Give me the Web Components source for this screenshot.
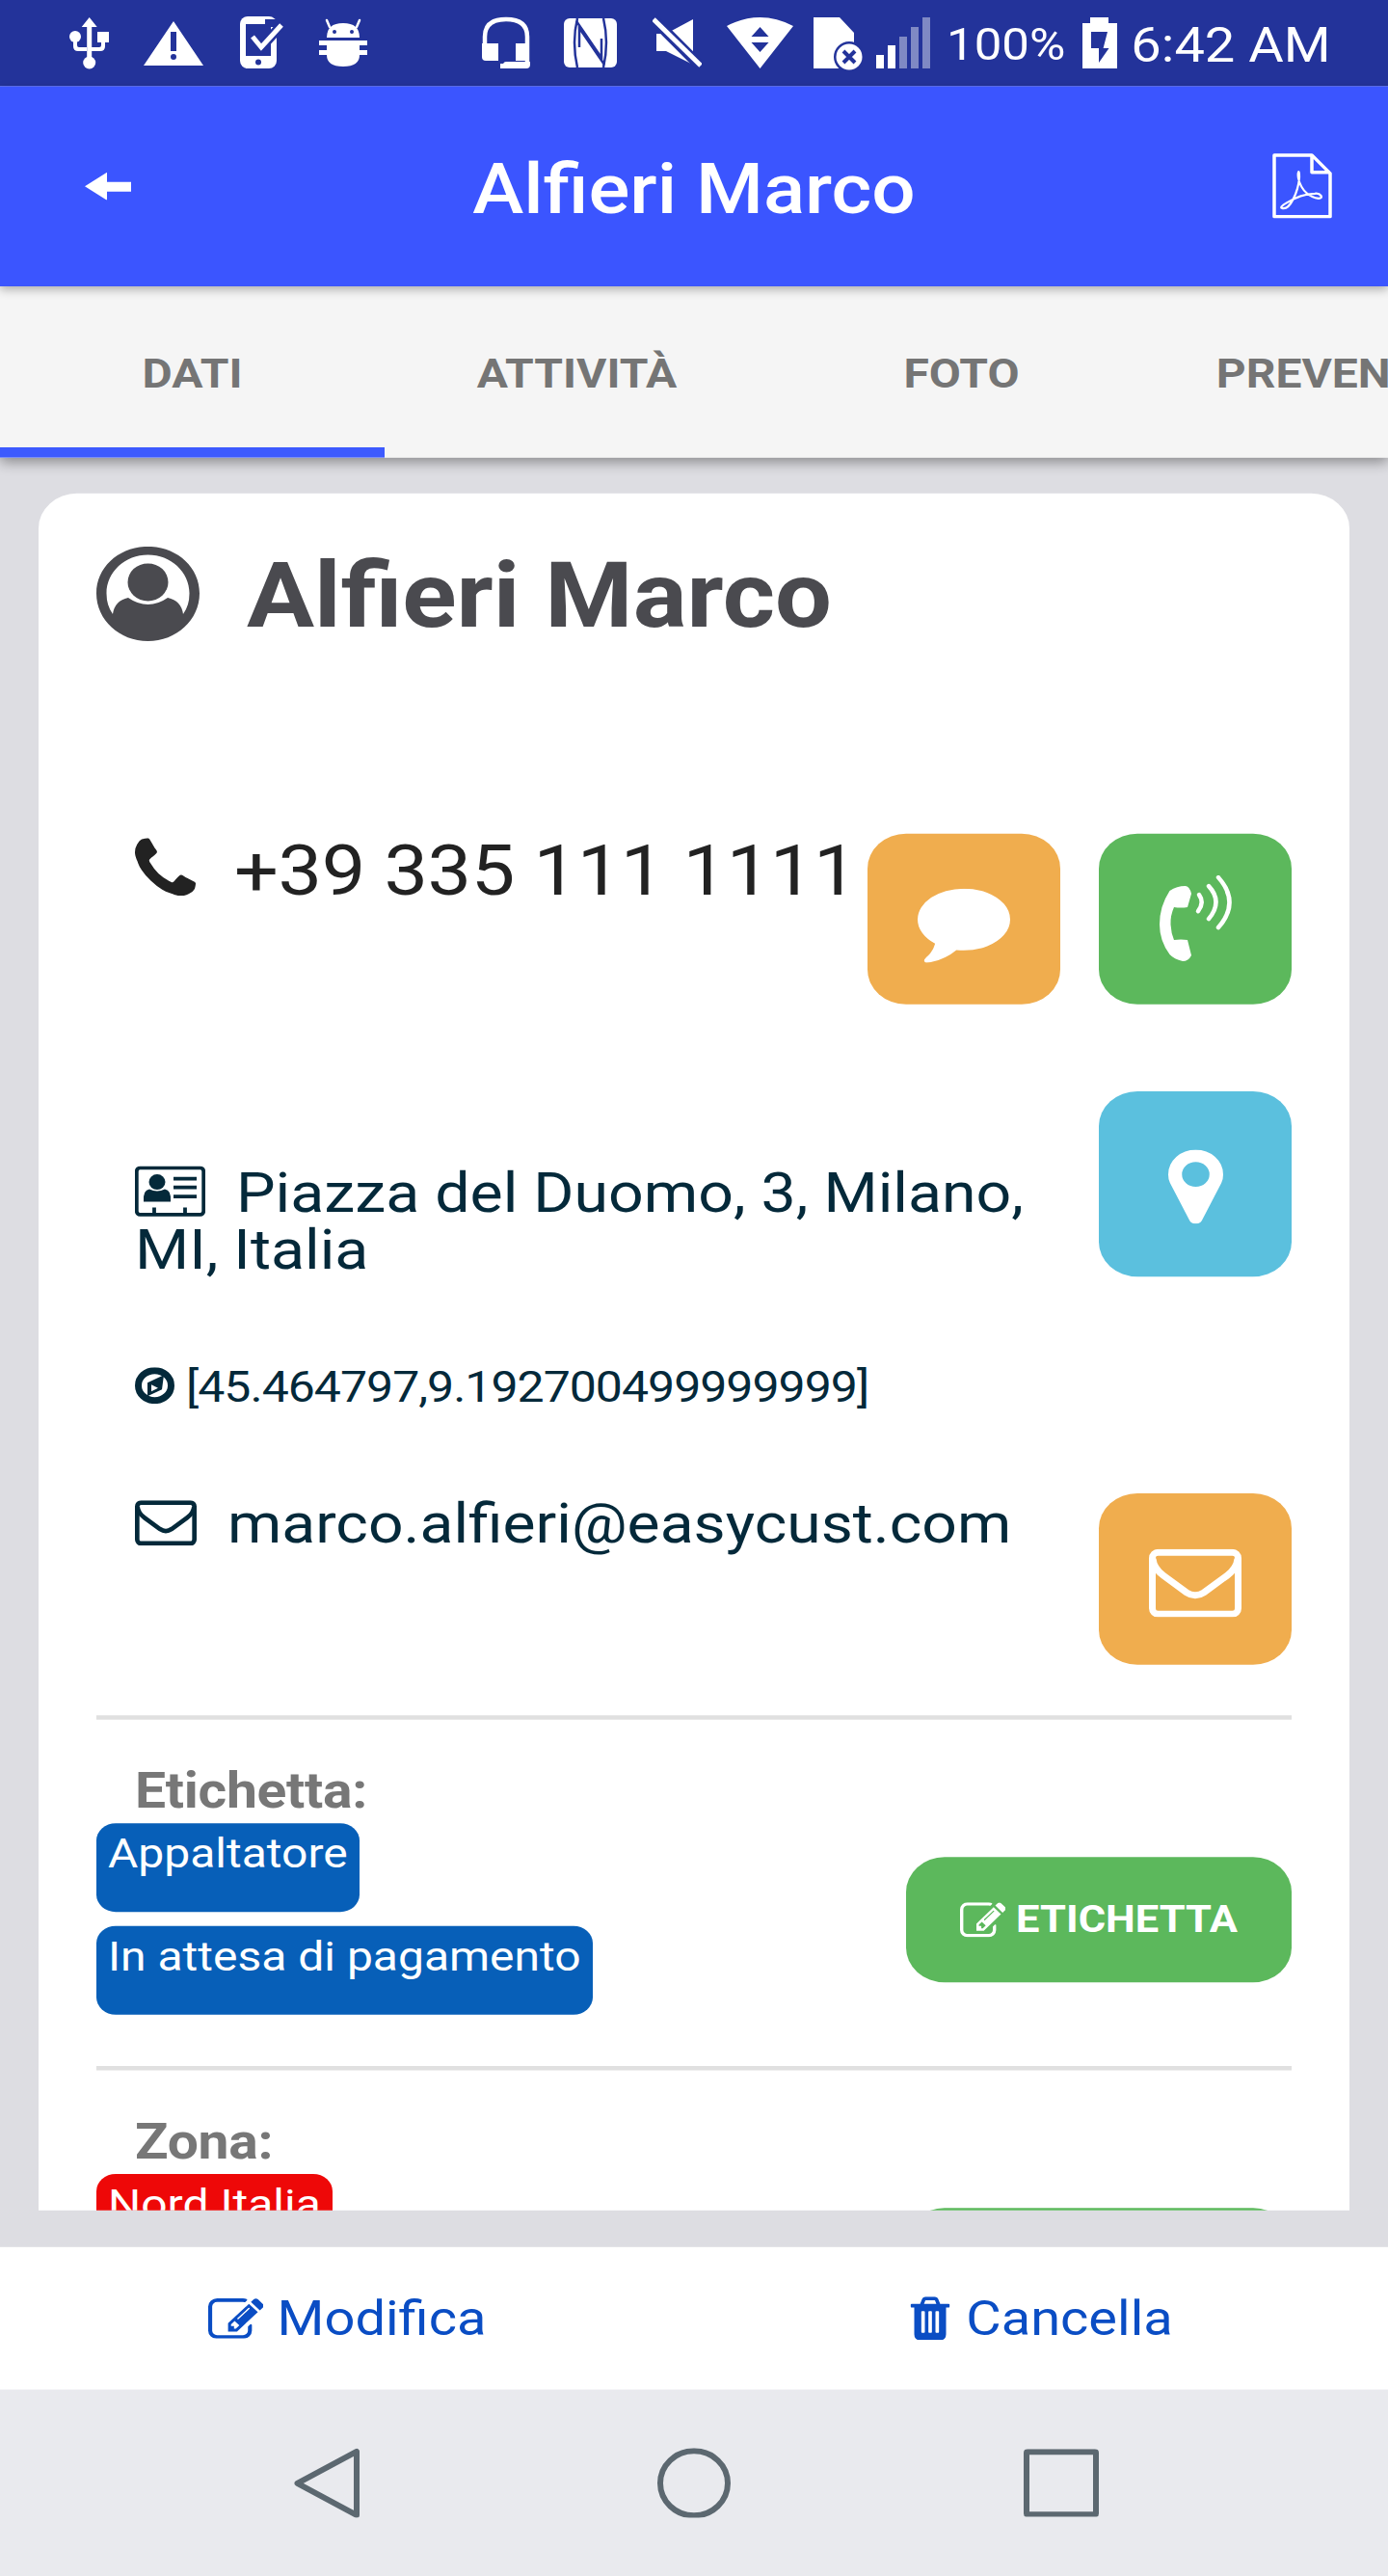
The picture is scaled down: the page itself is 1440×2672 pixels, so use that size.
<!DOCTYPE html>
<html lang="it">
<head>
<meta charset="utf-8">
<title>Alfieri Marco</title>
<style>
  html, body { margin: 0; height: 2672px; overflow: hidden; background: #dddde2; }
</style>
</head>
<body>
<app-shell>
  <status-bar slot="status"></status-bar>
  <app-header slot="header">Alfieri Marco</app-header>
  <tab-strip slot="tabs">
    <tab-item active>DATI</tab-item>
    <tab-item>ATTIVITÀ</tab-item>
    <tab-item>FOTO</tab-item>
    <tab-item>PREVENTIVI</tab-item>
  </tab-strip>

  <customer-card slot="card">
    <card-head>Alfieri Marco</card-head>

    <contact-row style="--h:196.5px">
      <contact-line icon="phone" style="--fs:81px;--lh:100px;--mt:-6.9px;--ls:-.4px;--im:40px;--iv:-1px;--c:#222;--ws:nowrap">+39 335 111 1111</contact-line>
      <action-tile slot="actions" color="#f0ad4e" style="--th:196.5px"><ui-icon name="comment" style="margin-top:14px"></ui-icon></action-tile>
      <action-tile slot="actions" color="#5cb85c" style="--th:196.5px"><ui-icon name="callvol"></ui-icon></action-tile>
    </contact-row>

    <contact-row style="--h:212.7px;--top:99.7px">
      <contact-line icon="idcard" style="--fs:64.4px;--lh:66px;--pt:83px;--im:32px;--iv:-5.5px;--w:960px">Piazza del Duomo, 3, Milano, MI, Italia</contact-line>
      <action-tile slot="actions" color="#5bc0de" style="--th:212.7px"><ui-icon name="pin" style="margin-top:6px"></ui-icon></action-tile>
    </contact-row>

    <contact-row style="--h:60px;--top:97.5px">
      <contact-line icon="compass" style="--fs:50px;--lh:60px;--ls:-1px;--im:12px;--iv:-2px">[45.464797,9.192700499999999]</contact-line>
    </contact-row>

    <contact-row style="--h:197px;--top:92px">
      <contact-line icon="envelope" style="--fs:64.2px;--lh:66px;--pt:1.5px;--im:32px;--iv:-3px">marco.alfieri@easycust.com</contact-line>
      <action-tile slot="actions" color="#f0ad4e"><ui-icon name="envelope-big" style="margin-top:8px"></ui-icon></action-tile>
    </contact-row>

    <tag-section label="Etichetta:" style="margin-top:58px">
      <tag-badge>Appaltatore</tag-badge>
      <tag-badge>In attesa di pagamento</tag-badge>
      <label-button slot="action">ETICHETTA</label-button>
    </tag-section>

    <tag-section label="Zona:">
      <tag-badge color="#ee0808">Nord Italia</tag-badge>
      <label-button slot="action"></label-button>
    </tag-section>
  </customer-card>

  <footer-actions slot="footer">
    <footer-link icon="edit">Modifica</footer-link>
    <footer-link icon="trash">Cancella</footer-link>
  </footer-actions>
  <nav-bar slot="nav"></nav-bar>
</app-shell>

<script>
// the screenshot is squeezed vertically, so the shell lays out at 2960 and is scaled down
const SQUEEZE = 0.9027;

const FA_EDIT = 'M888 1184l116-116-152-152-116 116v56h96v96h56zm440-720q-16-16-33 1l-350 350q-17 17-1 33t33-1l350-350q17-17 1-33zm80 594v190q0 119-84.5 203.5t-203.5 84.5h-832q-119 0-203.5-84.5t-84.5-203.5v-832q0-119 84.5-203.5t203.5-84.5h832q63 0 117 25 15 7 18 23 3 17-9 29l-49 49q-14 14-32 8-23-6-45-6h-832q-66 0-113 47t-47 113v832q0 66 47 113t113 47h832q66 0 113-47t47-113v-126q0-13 9-22l64-64q15-15 35-7t20 29zm-96-738l288 288-672 672h-288v-288zm444 132l-92 92-288-288 92-92q28-28 68-28t68 28l152 152q28 28 28 68t-28 68z';
const ENVELOPE = `
    <g fill="none" stroke="currentColor" stroke-width="7">
      <rect x="3.500" y="3.500" width="89" height="64" rx="6"/>
      <path d="M4 10Q5 20 15 27.500L39 45Q48 51 57 45L81 27.500Q91 20 92 10"/>
    </g>`;

// every icon: w/h in screenshot pixels, vb = viewBox, body = svg markup
const ICONS = {
  usb: { w: 41, h: 89, body: `
    <path d="M20.7 18l8 10h-5.5v32h-5V28h-5.500z"/>
    <circle cx="20.700" cy="65" r="6.500"/><circle cx="6" cy="38" r="6" />
    <path d="M4 42h4v5q0 2 2 2h8v4h-9q-5 0-5-5zM29 33h12v11h-4v4q0 5-5 5h-10v-4h9q2 0 2-2v-3h-4z"/>` },
  warn: { w: 62, h: 89, body: `
    <path fill-rule="evenodd" d="M31 22L62 68H0zM28 33v20h6V33zM31 56a3 3 0 100 6 3 3 0 000-6z"/>` },
  phonecheck: { w: 46, h: 89, body: `
    <rect x="0" y="17" width="38" height="54" rx="8"/>
    <rect x="6" y="25" width="26" height="33" fill="#23339a"/>
    <path d="M26 20h14v8H26z" fill="#23339a"/>
    <circle cx="19" cy="64.500" r="3" fill="#23339a"/>
    <path d="M13 38l9 11 21-23" fill="none" stroke="#23339a" stroke-width="10"/>
    <path d="M13 38l9 11 21-23" fill="none" stroke="#fff" stroke-width="5"/>` },
  android: { w: 50, h: 89, body: `
    <path d="M8 39q0-15 17-15t17 15z"/>
    <path d="M11 28l-3-7M39 28l3-7" stroke="#fff" stroke-width="2.500" stroke-linecap="round"/>
    <circle cx="16" cy="33" r="2" fill="#23339a"/><circle cx="34" cy="33" r="2" fill="#23339a"/>
    <path d="M0 42h50v5H42v5h8v5H42q0 12-17 12T8 57H0v-5h8v-5H0z"/>` },
  headset: { w: 50, h: 89, body: `
    <path d="M3 50V38Q3 20 25 20T47 38V66" fill="none" stroke="#fff" stroke-width="4.500"/>
    <path d="M0 45h17v18H4q-4 0-4-4z"/><path d="M35 45h13v18H35z"/>
    <path d="M19 66h3q1-2 3-2h25v3q0 4-4 4H19z"/>` },
  nfc: { w: 55, h: 89, body: `
    <rect y="19" width="55" height="51" rx="6"/>
    <g fill="none" stroke="#23339a" stroke-width="2.500">
      <path d="M14 19q-6 25 0 51M41 19q6 25 0 51"/>
      <path d="M13 22L39 60V40M42 67L16 29V49"/>
    </g>` },
  mute: { w: 51, h: 89, body: `
    <path d="M4 35H14L42 20V67L14 53H4z"/>
    <path d="M0 19L49 68" stroke="#23339a" stroke-width="11"/>
    <path d="M1 20L50 68" stroke="#fff" stroke-width="5"/>` },
  wifi: { w: 69, h: 89, body: `
    <path fill-rule="evenodd" d="M0 27Q34.500 9 69 27L34.500 71zM34.500 28l-9 10h18zM25.500 44l9 10 9-10z"/>` },
  sim: { w: 51, h: 89, body: `
    <path d="M0 18H27L42 34V71H0z"/>
    <circle cx="37" cy="59" r="16" fill="#23339a"/><circle cx="37" cy="59" r="13.500"/>
    <path d="M31 53L43 65M43 53L31 65" stroke="#23339a" stroke-width="4"/>` },
  signal: { w: 56, h: 89, body: `
    <rect y="57" width="8" height="14"/><rect x="12" y="47" width="8" height="24"/>
    <g opacity=".42"><rect x="24" y="38" width="8" height="33"/><rect x="36" y="28" width="8" height="43"/><rect x="48" y="18" width="8" height="53"/></g>` },
  battery: { w: 36, h: 89, body: `
    <path fill-rule="evenodd" d="M8 18H27V24H36V71H0V24H8zM9 33H26L21.600 50H27.500L17 65V50H9z"/>` },
  back: { w: 48, h: 29, body: `<path d="M23 0V10H48V20H23V29L0 14.500z"/>` },
  pdf: { w: 62, h: 68, body: `
    <g fill="none" stroke="#fff" stroke-width="3.500" stroke-linejoin="round">
      <path d="M2 2H41L60 21V66H2zM41 2V20H60"/>
      <path stroke-width="2.200" d="M10 57C18 60 27 40 28 25C28 15 26 20 27 26C30 40 40 46 48 47C54 47 50 41 44 42C32 42 22 47 14 52C10 54 8 57 10 57z"/>
    </g>` },
  usercircle: { w: 107, h: 98, body: `
    <path fill-rule="evenodd" d="M53.500 0C83 0 107 21 107 48.500S83 98 53.500 98 0 76 0 48.500 24 0 53.500 0zM53.500 8.500C30 8.500 10.500 26 10.500 48.500Q10.500 61 17 70 19 56 33 53 43 60 53.500 60T74 53Q88 56 90 70 96.500 61 96.500 48.500C96.500 26 77 8.500 53.500 8.500z"/>
    <ellipse cx="53.500" cy="37" rx="21" ry="19.500"/>` },
  phone: { w: 63, h: 60, vb: '192 128 1408 1408', body: `
    <path d="M1600 1240q0 27-10 70.500t-21 68.500q-21 50-122 106-94 51-186 51-27 0-53-3.500t-57.500-12.500-47-14.500-55.500-20.500-49-18q-98-35-175-83-127-79-264-216t-216-264q-48-77-83-175-3-9-18-49t-20.500-55.500-14.500-47-12.500-57.500-3.500-53q0-92 51-186 56-101 106-122 25-11 68.500-21t70.500-10q14 0 21 3 18 6 53 76 11 19 30 54t35 63.500 31 53.500q3 4 17.500 25t21.500 35.500 7 28.500q0 20-28.500 50t-62 55-62 53-28.500 46q0 9 5 22.500t8.500 20.500 14 24 11.500 19q76 137 174 235t235 174q2 1 19 11.500t24 14 20.500 8.500 22.500 5q18 0 46-28.500t53-62 55-62 50-28.500q14 0 28.500 7t35.500 21.500 25 17.500q25 15 53.500 31t63.500 35 54 30q70 35 76 53 3 7 3 21z"/>` },
  comment: { w: 96, h: 77, vb: '0 256 1792 1536', body: `
    <path d="M1792 896q0 174-120 321.500t-326 233-450 85.500q-70 0-145-8-198 175-460 242-49 14-114 22-17 2-30.500-9t-17.500-29v-1q-3-4-.5-12t2-10 4.500-9.500l6-9 7-8.500 8-9q7-8 31-34.500t34.500-38 31-39.500 32.500-51 27-59 26-76q-157-89-247.500-220t-90.500-281q0-130 71-248.500t191-204.500 286-136.500 348-50.500q244 0 450 85.500t326 233 120 321.500z"/>` },
  callvol: { w: 75, h: 90, body: `
    <path d="M26.600 11Q31 11 33 19L29 33Q22 34 15 33 11 42 11.500 51 12 60 15 67 22 66 29 67L33 83Q30 89 24 89 15 87 10.500 82 0 68 0 51 0 32 10.500 16 18 11 26.600 11z"/>
    <g fill="none" stroke="#fff" stroke-width="4.500" stroke-linecap="round">
      <path d="M41 20Q47 28 40 37"/><path d="M51 11Q66 27 51 45"/><path d="M61 2Q84 28 61 54"/>
    </g>` },
  pin: { w: 57, h: 77, vb: '384 128 1024 1536', body: `
    <path d="M1152 640q0-106-75-181t-181-75-181 75-75 181 75 181 181 75 181-75 75-181zm256 0q0 109-33 179l-364 774q-16 33-47.500 52t-67.500 19-67.500-19-46.500-52l-365-774q-33-70-33-179 0-212 150-362t362-150 362 150 150 362z"/>` },
  envelope: { w: 64, h: 47, vb: '0 0 96 71', body: ENVELOPE },
  'envelope-big': { w: 96, h: 71, vb: '0 0 96 71', body: ENVELOPE },
  idcard: { w: 73, h: 52, body: `
    <rect x="1.800" y="1.800" width="69.400" height="48.400" rx="3.500" fill="none" stroke="currentColor" stroke-width="3.800"/>
    <ellipse cx="23" cy="16.500" rx="8.500" ry="8"/>
    <path d="M9 37Q8 25 15 24 23 28 31 24 38 25 37 37z"/>
    <path d="M40 13H64M40 22H64M40 31.500H64M20 43V50M52 43V50" stroke="currentColor" stroke-width="3.800" fill="none"/>` },
  compass: { w: 41, h: 38, body: `
    <ellipse cx="20.500" cy="19" rx="17" ry="15.500" fill="none" stroke="currentColor" stroke-width="7"/>
    <path fill-rule="evenodd" d="M30 8L28 23 13 30 13 16zM17 18v7l7-3.500z"/>` },
  edit: { w: 57, h: 42, vb: '0 128 1770 1408', body: `<path d="${FA_EDIT}"/>` },
  'edit-small': { w: 47, h: 36, vb: '0 128 1770 1408', body: `<path d="${FA_EDIT}"/>` },
  trash: { w: 44, h: 45, vb: '128 128 1536 1536', body: `
    <path d="M704 1376v-704q0-14-9-23t-23-9h-64q-14 0-23 9t-9 23v704q0 14 9 23t23 9h64q14 0 23-9t9-23zm256 0v-704q0-14-9-23t-23-9h-64q-14 0-23 9t-9 23v704q0 14 9 23t23 9h64q14 0 23-9t9-23zm256 0v-704q0-14-9-23t-23-9h-64q-14 0-23 9t-9 23v704q0 14 9 23t23 9h64q14 0 23-9t9-23zm-544-992h448l-48-117q-7-9-17-11h-317q-10 2-17 11zm928 32v64q0 14-9 23t-23 9h-96v948q0 83-47 143.500t-113 60.500h-832q-66 0-113-58.500t-47-141.500v-952h-96q-14 0-23-9t-9-23v-64q0-14 9-23t23-9h309l70-167q15-37 54-63t79-26h320q40 0 79 26t54 63l70 167h309q14 0 23 9t9 23z"/>` },
  'nav-back': { w: 68, h: 73, body: `<path d="M65 3.500V69.500L3.500 36.500z" fill="none" stroke="currentColor" stroke-width="6" stroke-linejoin="round"/>` },
  'nav-home': { w: 76, h: 73, body: `<ellipse cx="38" cy="36.500" rx="35" ry="33.500" fill="none" stroke="currentColor" stroke-width="6"/>` },
  'nav-recent': { w: 78, h: 71, body: `<rect x="3" y="3" width="72" height="65" rx="1" fill="none" stroke="currentColor" stroke-width="6"/>` },
};

class UiIcon extends HTMLElement {
  connectedCallback() {
    const icon = ICONS[this.getAttribute('name')];
    const vb = icon.vb || `0 0 ${icon.w} ${icon.h}`;
    this.attachShadow({ mode: 'open' }).innerHTML = `
      <style>
        :host { display: block; flex: none; width: ${icon.w}px; height: ${icon.h / SQUEEZE}px; line-height: 0; }
        svg { display: block; width: 100%; height: 100%; fill: currentColor; }
      </style>
      <svg viewBox="${vb}" preserveAspectRatio="none" aria-hidden="true">${icon.body}</svg>`;
  }
}

class AppShell extends HTMLElement {
  connectedCallback() {
    this.attachShadow({ mode: 'open' }).innerHTML = `
      <style>
        :host { display: flex; flex-direction: column; width: 1440px; height: 2960px; margin-bottom: -288px; background: #dddde2;
                transform: scaleY(${SQUEEZE}); transform-origin: 0 0; font-family: Roboto, "Liberation Sans", sans-serif; }
        .main { flex: none; height: 2056.100px; padding-top: 41px; box-sizing: border-box; }
      </style>
      <slot name="status"></slot>
      <slot name="header"></slot>
      <slot name="tabs"></slot>
      <div class="main"><slot name="card"></slot></div>
      <slot name="footer"></slot>
      <slot name="nav"></slot>`;
  }
}

class StatusBar extends HTMLElement {
  connectedCallback() {
    const item = (name, gap) => `<ui-icon name="${name}" style="margin-left:${gap}px"></ui-icon>`;
    this.attachShadow({ mode: 'open' }).innerHTML = `
      <style>
        :host { display: flex; height: 98.600px; background: #23339a; color: #fff; overflow: hidden; }
        span { font: 400 51px/98.600px Roboto, sans-serif; padding-top: 3px; white-space: nowrap; }
        ui-icon { color: #fff; }
      </style>
      ${item('usb', 72)}${item('warn', 36)}${item('phonecheck', 38)}${item('android', 36)}
      ${item('headset', 119)}${item('nfc', 35)}${item('mute', 37)}${item('wifi', 26)}
      ${item('sim', 21)}${item('signal', 14)}
      <span style="margin-left:17px">100%</span>
      ${item('battery', 18)}
      <span style="margin-left:14px;font-size:56px">6:42 AM</span>`;
  }
}

class AppHeader extends HTMLElement {
  connectedCallback() {
    this.attachShadow({ mode: 'open' }).innerHTML = `
      <style>
        :host { display: flex; align-items: center; position: relative; z-index: 2; height: 230.400px; padding: 0 58px 0 88px;
                background: #3b55ff; color: #fff; box-shadow: 0 4px 10px rgba(0,0,0,.3); }
        .title { flex: 1; text-align: center; margin-right: 16px; padding-top: 8px; font: 500 80px/100px Roboto, sans-serif; }
      </style>
      <ui-icon name="back"></ui-icon>
      <div class="title"><slot></slot></div>
      <ui-icon name="pdf"></ui-icon>`;
  }
}

class TabStrip extends HTMLElement {
  connectedCallback() {
    this.attachShadow({ mode: 'open' }).innerHTML = `
      <style>
        :host { display: flex; position: relative; z-index: 1; height: 197.200px; background: #f5f5f5; overflow: hidden;
                box-shadow: 0 5px 14px rgba(0,0,0,.4); clip-path: inset(0 0 -40px 0); }
      </style>
      <slot></slot>`;
  }
}

class TabItem extends HTMLElement {
  connectedCallback() {
    this.attachShadow({ mode: 'open' }).innerHTML = `
      <style>
        :host { display: flex; flex: none; width: 399px; box-sizing: border-box; align-items: center; justify-content: center;
                padding-top: 14px; border-bottom: 12.200px solid transparent; white-space: nowrap;
                font: 700 48px/60px Roboto, sans-serif; color: #757575; }
        :host([active]) { border-bottom-color: #3d5afe; }
      </style>
      <slot></slot>`;
  }
}

class CustomerCard extends HTMLElement {
  connectedCallback() {
    this.attachShadow({ mode: 'open' }).innerHTML = `
      <style>
        :host { display: block; height: 1972.800px; margin: 0 40px; padding: 0 60px; box-sizing: border-box;
                background: #fff; border-radius: 40px 40px 0 0; overflow: hidden; }
      </style>
      <slot></slot>`;
  }
}

class CardHead extends HTMLElement {
  connectedCallback() {
    this.attachShadow({ mode: 'open' }).innerHTML = `
      <style>
        :host { display: flex; align-items: flex-start; height: 390.800px; padding-top: 57.600px; box-sizing: border-box; color: #4a4a4f; }
        ui-icon { margin: 3.200px 49px 0 0; }
        .name { margin-top: -1px; font: 700 104.300px/120px Roboto, sans-serif; white-space: nowrap; }
      </style>
      <ui-icon name="usercircle"></ui-icon>
      <div class="name"><slot></slot></div>`;
  }
}

class ContactRow extends HTMLElement {
  connectedCallback() {
    this.attachShadow({ mode: 'open' }).innerHTML = `
      <style>
        :host { display: flex; justify-content: space-between; align-items: flex-start; height: var(--h); margin-top: var(--top, 0); }
        .actions { display: flex; gap: 40px; margin-left: auto; }
      </style>
      <slot></slot>
      <div class="actions"><slot name="actions"></slot></div>`;
  }
}

class ContactLine extends HTMLElement {
  connectedCallback() {
    this.attachShadow({ mode: 'open' }).innerHTML = `
      <style>
        :host { display: block; margin: var(--mt, 0) 0 0 40px; padding-top: var(--pt, 0); max-width: var(--w, none);
                font: 400 var(--fs)/var(--lh) Roboto, sans-serif; letter-spacing: var(--ls, normal);
                white-space: var(--ws, normal); color: var(--c, #04293a); }
        ui-icon { display: inline-block; vertical-align: var(--iv, 0); margin-right: var(--im, 0); }
      </style>
      <ui-icon name="${this.getAttribute('icon')}"></ui-icon><slot></slot>`;
  }
}

class ActionTile extends HTMLElement {
  connectedCallback() {
    this.attachShadow({ mode: 'open' }).innerHTML = `
      <style>
        :host { display: flex; align-items: center; justify-content: center; flex: none; width: 200px; height: var(--th, 197px);
                border-radius: 40px; color: #fff; background: ${this.getAttribute('color')}; }
      </style>
      <slot></slot>`;
  }
}

class TagSection extends HTMLElement {
  connectedCallback() {
    this.attachShadow({ mode: 'open' }).innerHTML = `
      <style>
        :host { display: flex; justify-content: space-between; align-items: flex-start; height: 403px; box-sizing: border-box;
                border-top: 5px solid #e0e0e0; }
        .left { padding-top: 52px; }
        .label { margin-left: 40px; font: 700 57px/60px Roboto, sans-serif; letter-spacing: -.3px; color: #777; }
        .badges { display: flex; flex-direction: column; align-items: flex-start; gap: 16px; margin-top: 7px; }
        .action { margin-top: 157.600px; }
      </style>
      <div class="left">
        <div class="label">${this.getAttribute('label')}</div>
        <div class="badges"><slot></slot></div>
      </div>
      <div class="action"><slot name="action"></slot></div>`;
  }
}

class TagBadge extends HTMLElement {
  connectedCallback() {
    this.attachShadow({ mode: 'open' }).innerHTML = `
      <style>
        :host { display: block; height: 102px; padding: 5px 12px 0; box-sizing: border-box; border-radius: 20px; white-space: nowrap;
                font: 400 48px/60px Roboto, sans-serif; color: #fff; background: ${this.getAttribute('color') || '#075fb8'}; }
      </style>
      <slot></slot>`;
  }
}

class LabelButton extends HTMLElement {
  connectedCallback() {
    this.attachShadow({ mode: 'open' }).innerHTML = `
      <style>
        :host { display: flex; align-items: center; justify-content: center; gap: 11px; width: 400px; height: 144px;
                border-radius: 40px; background: #5cb85c; color: #fff; font: 700 43.500px/50px Roboto, sans-serif; }
      </style>
      <ui-icon name="edit-small"></ui-icon><slot></slot>`;
  }
}

class FooterActions extends HTMLElement {
  connectedCallback() {
    this.attachShadow({ mode: 'open' }).innerHTML = `
      <style>
        :host { display: grid; grid-template-columns: 1fr 1fr; height: 163.700px; background: #fff; }
      </style>
      <slot></slot>`;
  }
}

class FooterLink extends HTMLElement {
  connectedCallback() {
    this.attachShadow({ mode: 'open' }).innerHTML = `
      <style>
        :host { display: flex; align-items: center; justify-content: center; gap: 15px; color: #0a4dc4; font: 400 56px/70px Roboto, sans-serif; }
      </style>
      <ui-icon name="${this.getAttribute('icon')}"></ui-icon><span><slot></slot></span>`;
  }
}

class NavBar extends HTMLElement {
  connectedCallback() {
    this.attachShadow({ mode: 'open' }).innerHTML = `
      <style>
        :host { display: grid; grid-template-columns: repeat(3, 381px); justify-content: center; justify-items: center; align-items: center;
                height: 214px; background: #e9eaee; color: #5c6870; }
      </style>
      <ui-icon name="nav-back"></ui-icon>
      <ui-icon name="nav-home"></ui-icon>
      <ui-icon name="nav-recent"></ui-icon>`;
  }
}

customElements.define('ui-icon', UiIcon);
customElements.define('app-shell', AppShell);
customElements.define('status-bar', StatusBar);
customElements.define('app-header', AppHeader);
customElements.define('tab-strip', TabStrip);
customElements.define('tab-item', TabItem);
customElements.define('customer-card', CustomerCard);
customElements.define('card-head', CardHead);
customElements.define('contact-row', ContactRow);
customElements.define('contact-line', ContactLine);
customElements.define('action-tile', ActionTile);
customElements.define('tag-section', TagSection);
customElements.define('tag-badge', TagBadge);
customElements.define('label-button', LabelButton);
customElements.define('footer-actions', FooterActions);
customElements.define('footer-link', FooterLink);
customElements.define('nav-bar', NavBar);
</script>
</body>
</html>
